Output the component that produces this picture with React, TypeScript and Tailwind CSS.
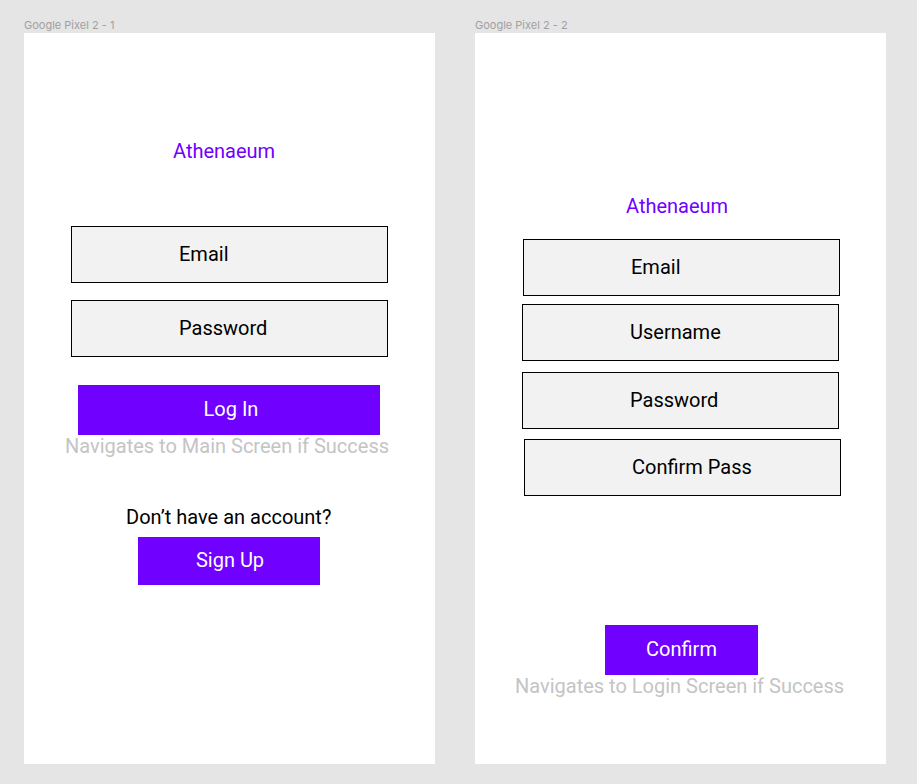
import React from "react";

// Figma-style canvas with two phone frames: login and sign-up mockups.

const PURPLE = "bg-[#7000ff]";

function Field({ label, className = "" }: { label: string; className?: string }) {
  return (
    <div
      className={`flex h-[57px] w-[317px] items-center border border-black bg-[#f2f2f2] pb-[2px] text-[20px] leading-6 text-black ${className}`}
    >
      {label}
    </div>
  );
}

function Button({ label, className = "" }: { label: string; className?: string }) {
  return (
    <button
      className={`flex items-center justify-center ${PURPLE} pb-[2px] text-[20px] leading-6 text-white ${className}`}
    >
      {label}
    </button>
  );
}

function Frame({ title, children }: { title: string; children: React.ReactNode }) {
  return (
    <div className="flex flex-col">
      <div className="mb-px h-[14px] font-['Inter',sans-serif] text-[11px] leading-[14px] text-[#a0a0a0]">
        {title}
      </div>
      <div className="flex h-[731px] w-[411px] flex-col items-start bg-white">{children}</div>
    </div>
  );
}

function LoginScreen() {
  return (
    <Frame title="Google Pixel 2 - 1">
      <div className="ml-[149px] mt-[106px] text-[20px] leading-6 text-[#7000ff]">Athenaeum</div>
      <Field label="Email" className="ml-[47px] mt-[63px] pl-[107px]" />
      <Field label="Password" className="ml-[47px] mt-[17px] pl-[107px]" />
      <Button label="Log In" className="ml-[54px] mt-[28px] h-[50px] w-[302px] pl-1" />
      <div className="-mt-px ml-[41px] text-[20px] leading-6 text-[#c4c4c4]">
        Navigates to Main Screen if Success
      </div>
      <div className="ml-[102px] mt-[47px] text-[20px] leading-6 text-black">
        Don’t have an account?
      </div>
      <Button label="Sign Up" className="ml-[114px] mt-[8px] h-[48px] w-[182px] pl-0.5" />
    </Frame>
  );
}

function SignUpScreen() {
  return (
    <Frame title="Google Pixel 2 - 2">
      <div className="ml-[151px] mt-[161px] text-[20px] leading-6 text-[#7000ff]">Athenaeum</div>
      <Field label="Email" className="ml-[48px] mt-[21px] pl-[107px]" />
      <Field label="Username" className="ml-[47px] mt-[8px] pl-[107px]" />
      <Field label="Password" className="ml-[47px] mt-[11px] pl-[107px]" />
      <Field label="Confirm Pass" className="ml-[49px] mt-[10px] pl-[107px]" />
      <Button label="Confirm" className="ml-[130px] mt-[129px] h-[50px] w-[153px]" />
      <div className="-mt-px ml-[40px] text-[20px] leading-6 text-[#c4c4c4]">
        Navigates to Login Screen if Success
      </div>
    </Frame>
  );
}

export default function App() {
  return (
    <div className="flex min-h-[784px] w-[917px] gap-10 bg-[#e5e5e5] pl-6 pt-[18px] font-['Roboto',sans-serif]">
      <LoginScreen />
      <SignUpScreen />
    </div>
  );
}
